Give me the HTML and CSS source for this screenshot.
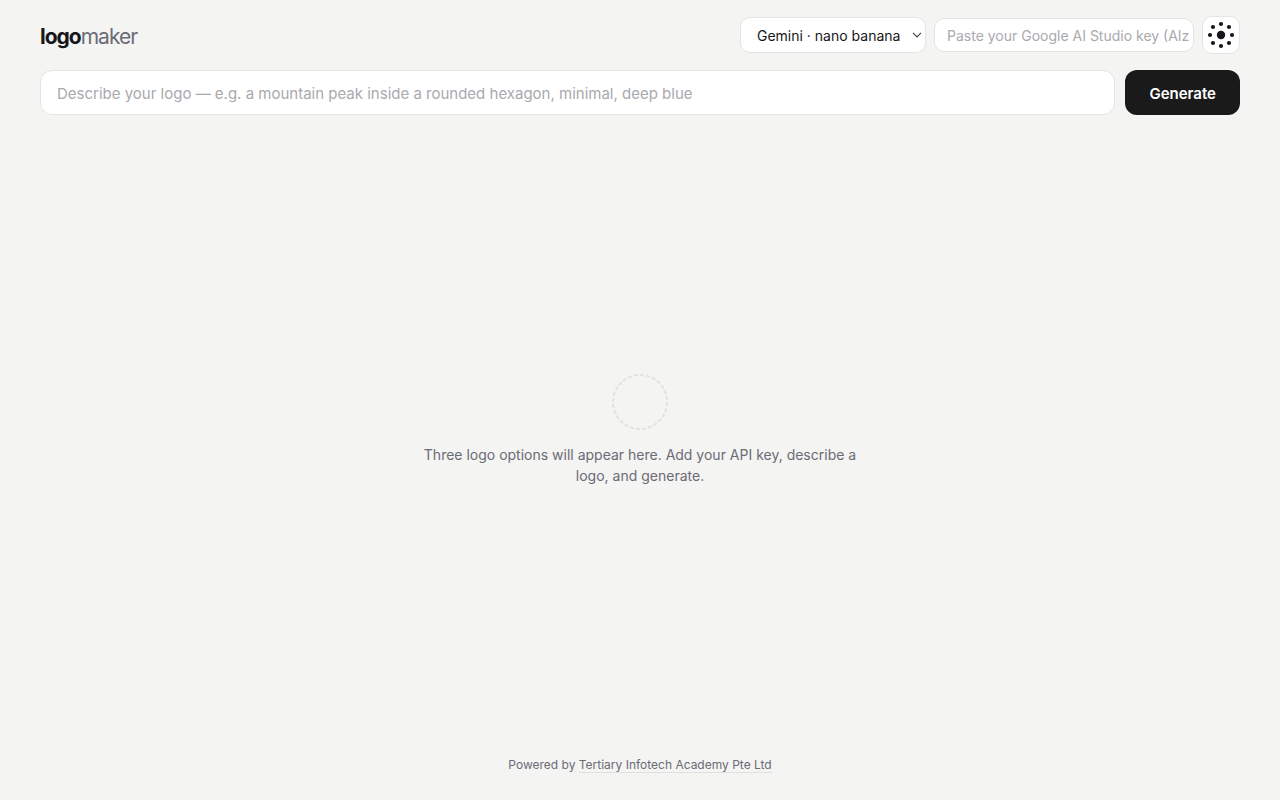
FILE: index.html
```html
<!DOCTYPE html>
<html lang="en">
<head>
	<meta charset="UTF-8">
	<meta name="viewport" content="width=device-width, initial-scale=1">
	<title>logomaker</title>
	<link rel="stylesheet" href="styles.css">
</head>
<body>
	<header class="topbar">
		<h1 class="brand">logo<span>maker</span></h1>
		<div class="settings">
			<select id="model" class="model" aria-label="Model">
				<option value="gemini">Gemini · nano banana</option>
			</select>
			<input type="text" id="apiKey" class="api-key" aria-label="API key" placeholder="Paste your Google AI Studio key (AIz">
			<button type="button" class="theme" aria-label="Toggle theme">
				<svg width="28" height="28" viewBox="0 0 28 28" fill="currentColor" aria-hidden="true">
					<circle cx="14" cy="14" r="4.2"/>
					<circle cx="14" cy="3" r="2.1"/>
					<circle cx="22" cy="6" r="2.1"/>
					<circle cx="25" cy="14" r="2.1"/>
					<circle cx="22" cy="22" r="2.1"/>
					<circle cx="14" cy="25" r="2.1"/>
					<circle cx="6" cy="22" r="2.1"/>
					<circle cx="3" cy="14" r="2.1"/>
					<circle cx="6" cy="6" r="2.1"/>
				</svg>
			</button>
		</div>
	</header>
	<form class="prompt-row">
		<input type="text" id="prompt" class="prompt" aria-label="Logo description" placeholder="Describe your logo — e.g. a mountain peak inside a rounded hexagon, minimal, deep blue">
		<button type="button" class="generate">Generate</button>
	</form>
	<main class="stage">
		<div class="empty">
			<svg class="ring" width="56" height="56" viewBox="0 0 56 56" aria-hidden="true">
				<circle cx="28" cy="28" r="27" fill="none" stroke="#e2e2de" stroke-width="2" pathLength="168" stroke-dasharray="4 2"/>
			</svg>
			<p>Three logo options will appear here. Add your API key, describe a logo, and generate.</p>
		</div>
	</main>
	<footer class="footer">Powered by <a href="#">Tertiary Infotech Academy Pte Ltd</a></footer>
</body>
</html>
```
FILE: styles.css
```css
* {
	box-sizing: border-box;
}
body {
	margin: 0;
	min-height: 100vh;
	padding: 16px 40px 25px;
	display: flex;
	flex-direction: column;
	font-family: Inter, sans-serif;
	font-size: 14px;
	background-color: #f4f4f2;
	color: #16161a;
}
input, select, button {
	font-family: inherit;
	color: inherit;
	border: 1px solid #e4e4e0;
	background-color: #fff;
}
input::placeholder {
	color: #a9a9ae;
}
.topbar {
	display: flex;
	align-items: center;
	justify-content: space-between;
	margin-bottom: 16px;
}
.brand {
	margin: 0;
	padding-top: 2px;
	font-size: 21px;
	font-weight: 700;
	letter-spacing: -1px;
}
.brand span {
	font-weight: 400;
	color: #6b6b76;
}
.settings {
	display: flex;
	align-items: center;
	gap: 8px;
}
.model {
	appearance: none;
	height: 36px;
	padding: 0 24px 0 16px;
	font-size: 14px;
	border-radius: 10px;
	background-image: url("data:image/svg+xml,%3Csvg xmlns='http://www.w3.org/2000/svg' width='10' height='6' fill='none' stroke='%2344444a' stroke-width='1.2'%3E%3Cpath d='M1 .8l4 4 4-4'/%3E%3C/svg%3E");
	background-repeat: no-repeat;
	background-position: right 3px center;
}
.api-key {
	width: 260px;
	height: 34px;
	padding: 0 4px 0 12px;
	font-size: 14px;
	border-radius: 10px;
}
.theme {
	display: grid;
	place-items: center;
	width: 38px;
	height: 38px;
	padding: 0;
	border-radius: 10px;
	cursor: pointer;
}
.prompt-row {
	display: flex;
	gap: 10px;
}
.prompt {
	flex: 1;
	height: 45px;
	padding: 1px 16px 0;
	font-size: 15px;
	border-radius: 12px;
}
.generate {
	padding: 1px 24px 0;
	font-size: 15px;
	font-weight: 600;
	color: #fff;
	background-color: #1a1a1a;
	border: none;
	border-radius: 12px;
	cursor: pointer;
}
.stage {
	flex: 1;
	display: grid;
	place-items: center;
	padding-bottom: 10px;
}
.empty {
	max-width: 440px;
	text-align: center;
	color: #6b6b76;
}
.ring {
	display: block;
	margin: 0 auto 14px;
}
.empty p {
	margin: 0;
	line-height: 21px;
}
.footer {
	text-align: center;
	font-size: 12px;
	line-height: 21px;
	color: #6b6b76;
}
.footer a {
	color: inherit;
	text-decoration: none;
	border-bottom: 1px solid #e0e0dd;
}
```
